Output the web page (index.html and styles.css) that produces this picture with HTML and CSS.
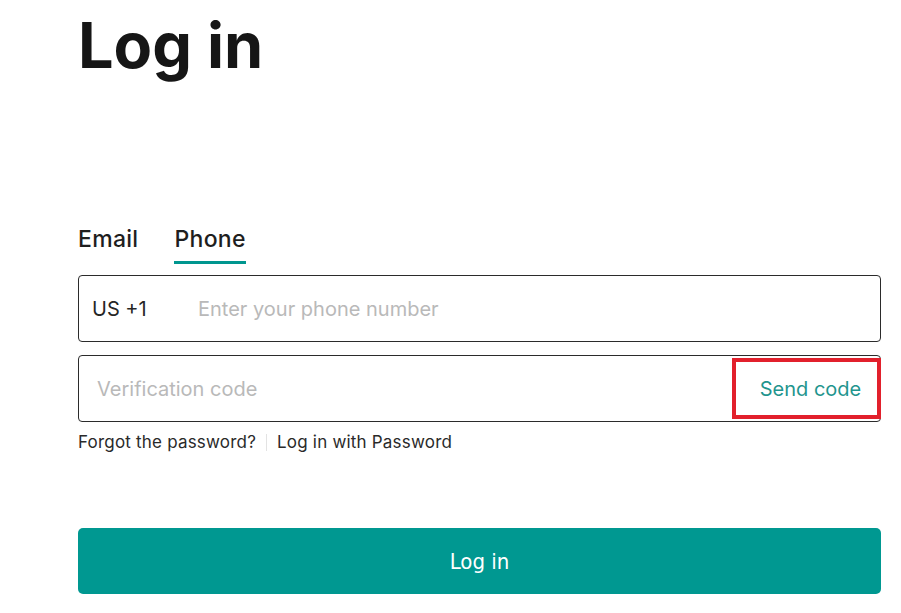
FILE: index.html
```html
<!DOCTYPE html>
<html lang="en">

<head>
    <meta charset="UTF-8">
    <meta name="viewport" content="width=device-width, initial-scale=1.0">
    <title>Log in</title>
    <link rel="stylesheet" href="styles.css">
</head>

<body>
    <div class="login-container">
        <h1>Log in</h1>

        <div class="tabs">
            <span class="tab">Email</span>
            <span class="tab active">Phone</span>
        </div>

        <form class="login-form">
            <div class="field">
                <span class="prefix">US +1</span>
                <input type="text" placeholder="Enter your phone number">
            </div>
            <div class="field">
                <input type="text" class="code-input" placeholder="Verification code">
                <button type="button" class="btn-send">Send code</button>
            </div>
            <div class="links">
                <a href="#">Forgot the password?</a>
                <span class="divider"></span>
                <a href="#">Log in with Password</a>
            </div>
            <button type="submit" class="btn-login">Log in</button>
        </form>
    </div>
</body>

</html>
```

FILE: styles.css
```css
/* Body Styling */
body {
    font-family: Inter, Roboto, sans-serif;
    background: #ffffff;
    margin: 0;
    padding: 0;
    color: #1a1a1a;
}

/* Container */
.login-container {
    width: 803px;
    padding-left: 78px;
}

/* Heading */
h1 {
    font-size: 63px;
    font-weight: 700;
    line-height: 1;
    margin: 0;
    padding-top: 14px;
    color: #161616;
}

/* Tabs */
.tabs {
    display: flex;
    gap: 36px;
    margin-top: 148px;
}

.tab {
    font-size: 23px;
    font-weight: 500;
    letter-spacing: 0.3px;
    color: #1e1e1e;
    padding-bottom: 8px;
    border-bottom: 3px solid transparent;
}

.tab.active {
    border-bottom-color: #00968f;
}

/* Form */
.login-form {
    margin-top: 11px;
}

.field {
    display: flex;
    align-items: center;
    height: 65px;
    border: 1px solid #2b2b2b;
    border-radius: 4px;
    margin-bottom: 13px;
}

.prefix {
    font-size: 20px;
    color: #262626;
    padding-left: 13px;
    width: 104px;
}

input {
    flex: 1;
    border: none;
    outline: none;
    font-family: inherit;
    font-size: 20px;
    color: #262626;
    background: transparent;
}

input::placeholder {
    color: #b9b9b9;
}

.code-input {
    padding-left: 18px;
}

.btn-send {
    height: 61px;
    width: 149px;
    margin-right: -1px;
    border: 4px solid #e2202c;
    background: #ffffff;
    color: #1f958e;
    font-family: inherit;
    font-size: 20px;
    padding: 0 0 0 8px;
    cursor: pointer;
}

/* Links */
.links {
    display: flex;
    align-items: center;
    gap: 10px;
    margin-top: -3px;
}

.links a {
    font-size: 17px;
    letter-spacing: 0.2px;
    color: #2a2a2a;
    text-decoration: none;
}

.divider {
    width: 1px;
    height: 17px;
    background: #e3e3e3;
}

/* Login Button */
.btn-login {
    display: block;
    width: 100%;
    height: 66px;
    margin-top: 76px;
    border: none;
    border-radius: 5px;
    background-color: #009891;
    color: #ffffff;
    font-family: "DejaVu Sans Condensed", "DejaVu Sans", sans-serif;
    font-size: 22px;
    font-weight: 400;
    cursor: pointer;
}
```
